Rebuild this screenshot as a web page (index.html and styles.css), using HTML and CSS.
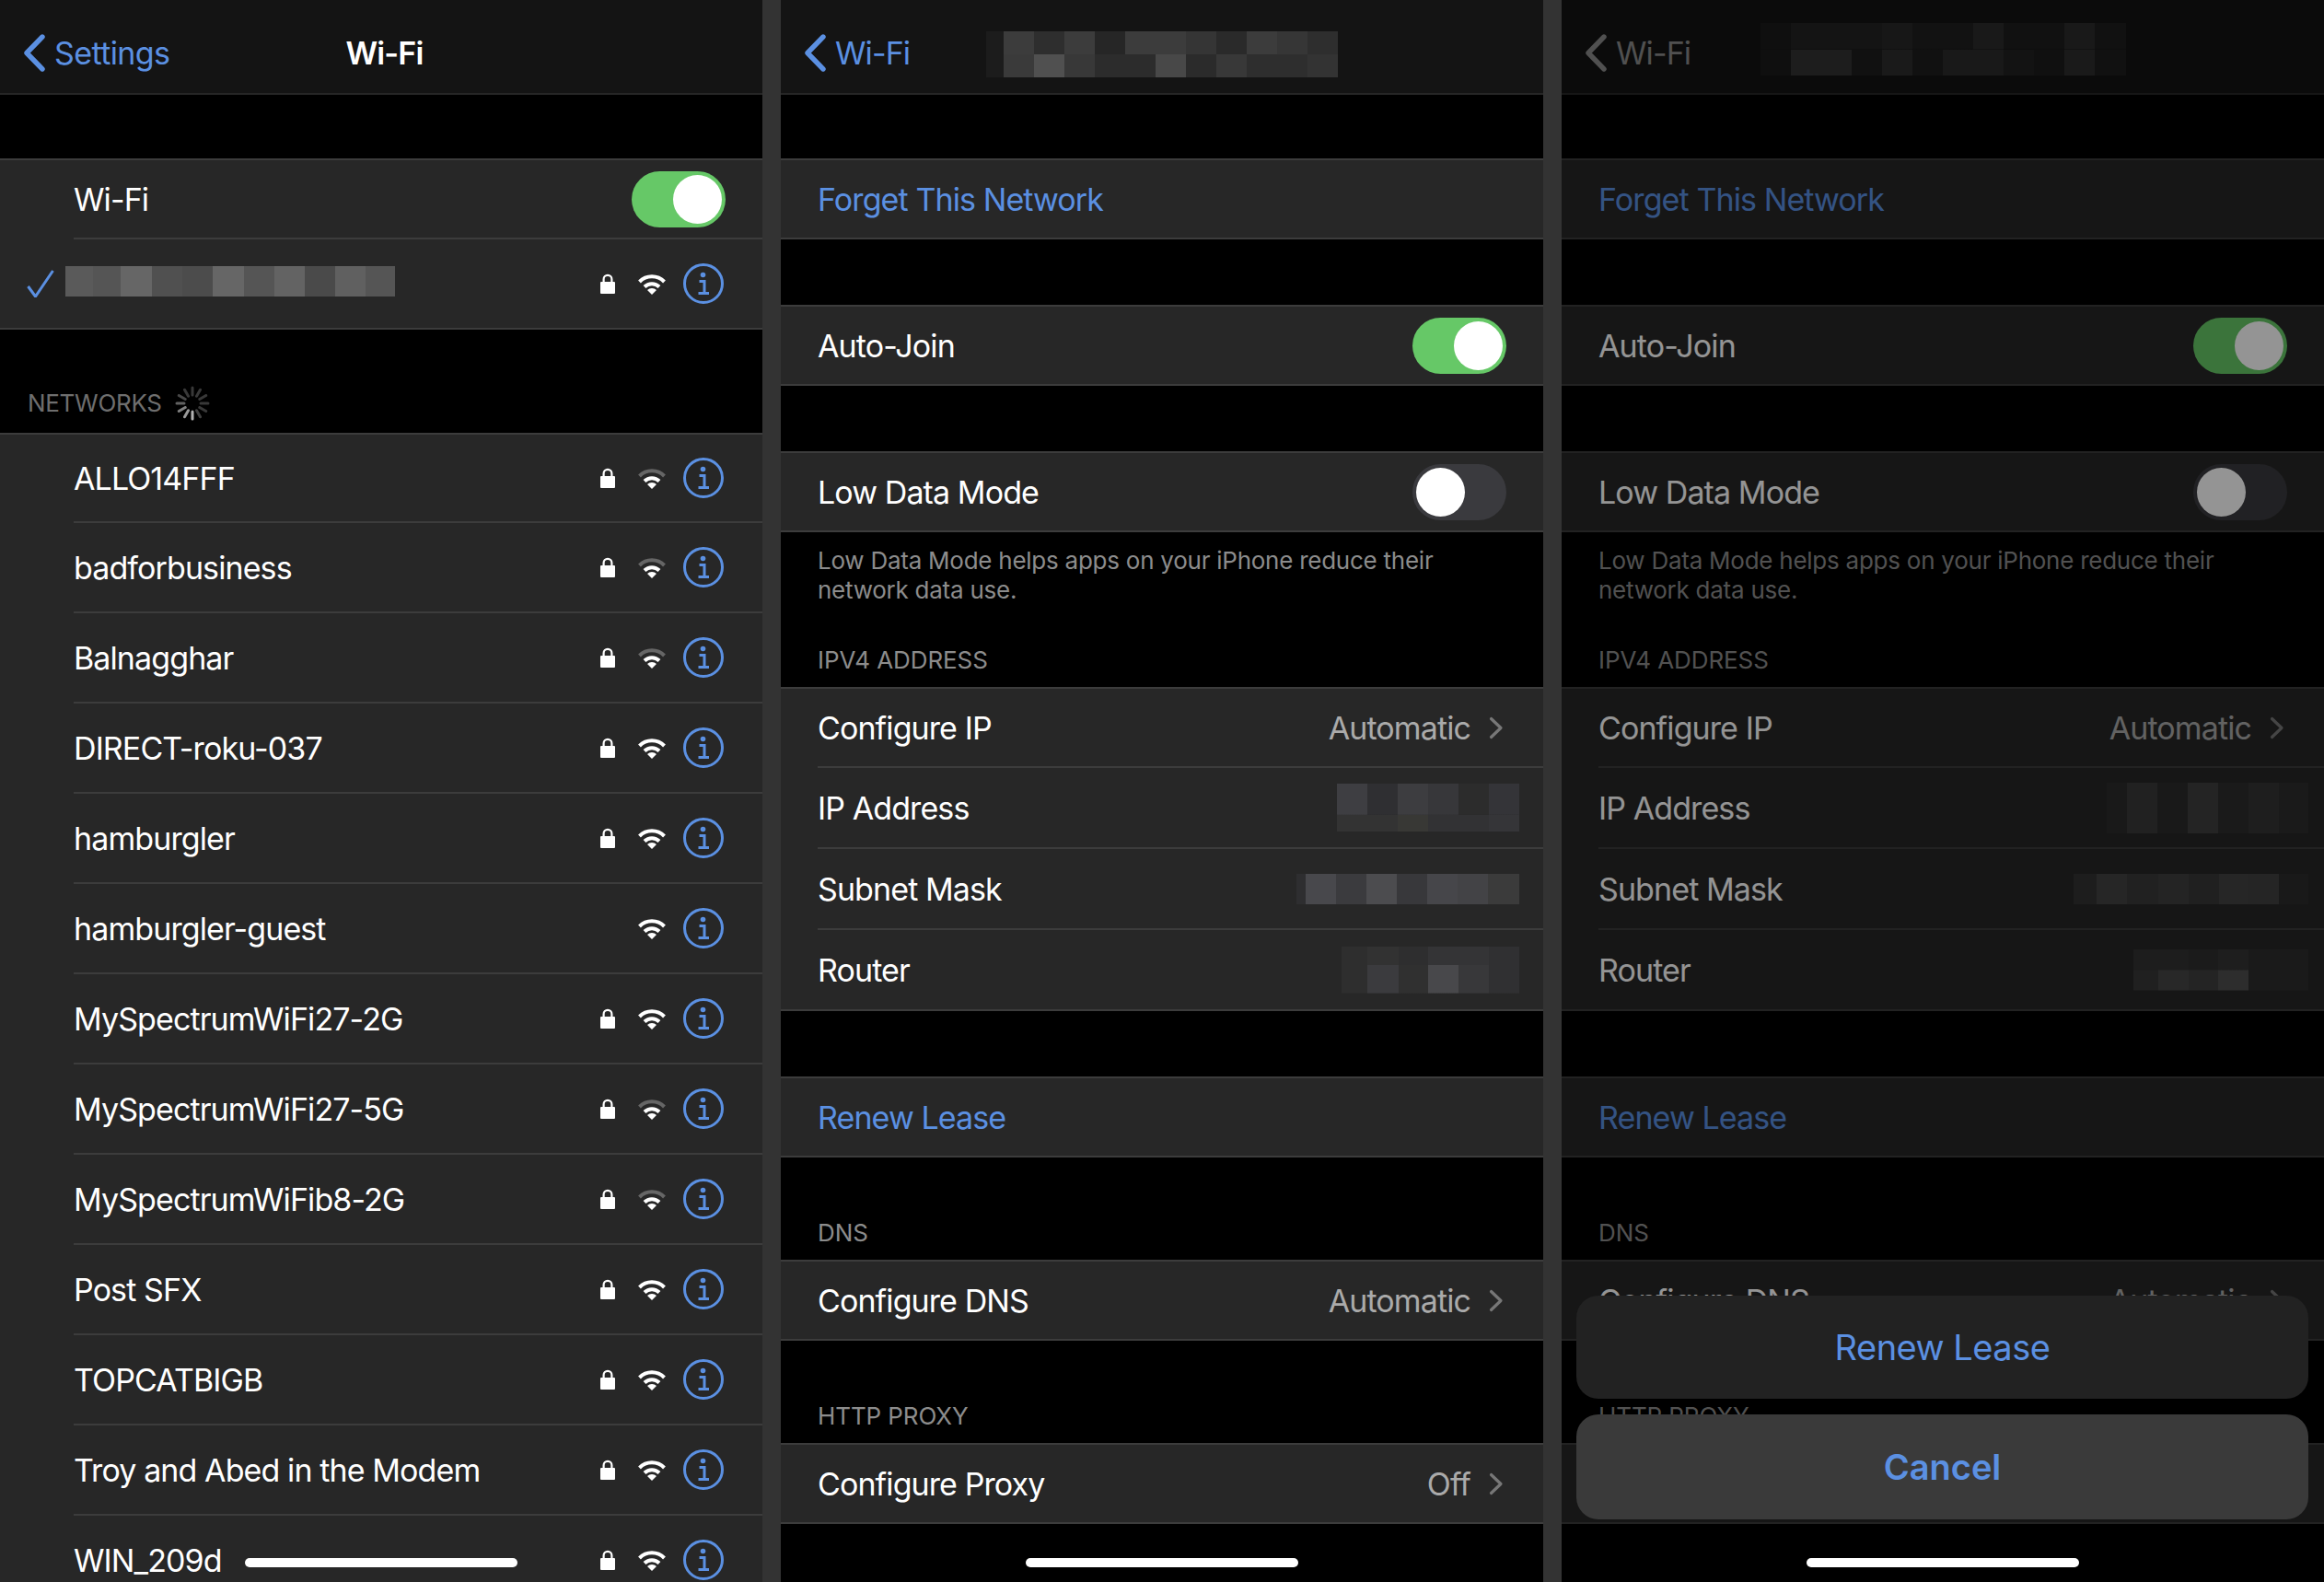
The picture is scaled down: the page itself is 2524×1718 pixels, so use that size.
FILE: index.html
```html
<!DOCTYPE html>
<html>
<head>
  <title>Wi-Fi Settings</title>
  <link rel="stylesheet" href="styles.css">
</head>
<body>
  <svg class="defs" width="0" height="0">
    <symbol id="i-back" viewBox="0 0 24 41">
      <path d="M21 3 L4 20.5 L21 38" fill="none" stroke="currentColor" stroke-width="5.4" stroke-linecap="round" stroke-linejoin="round"/>
    </symbol>
    <symbol id="i-check" viewBox="0 0 30 30">
      <path d="M1.5 18 L9.5 29 L28.5 1" fill="none" stroke="currentColor" stroke-width="3"/>
    </symbol>
    <symbol id="i-lock" viewBox="0 0 16 22">
      <path d="M3.6 10 V6.2 A4.4 4.4 0 0 1 12.4 6.2 V10" fill="none" stroke="#fff" stroke-width="2.2"/>
      <rect y="9" width="16" height="13" rx="1" fill="#fff"/>
    </symbol>
    <symbol id="i-wifi" viewBox="0 0 32 23">
      <path d="M2.5 9 A19 19 0 0 1 29.5 9" fill="none" style="stroke: var(--arc, #fff)" stroke-width="4"/>
      <path d="M8 14.5 A11.5 11.5 0 0 1 24 14.5" fill="none" stroke="#fff" stroke-width="4"/>
      <path d="M16 23 L11 18 A7 7 0 0 1 21 18 Z" fill="#fff"/>
    </symbol>
    <symbol id="i-info" viewBox="0 0 44 44">
      <circle cx="22" cy="22" r="20.5" fill="none" stroke="currentColor" stroke-width="3"/>
      <circle cx="21.5" cy="12.5" r="2.8" fill="currentColor"/>
      <path d="M17.5 19.5 H23 V32 M16.5 32.5 H28" fill="none" stroke="currentColor" stroke-width="3"/>
    </symbol>
    <symbol id="i-next" viewBox="0 0 16 25">
      <path d="M2.5 2.5 L13 12.5 L2.5 22.5" fill="none" stroke="currentColor" stroke-width="3.2" stroke-linecap="round" stroke-linejoin="round"/>
    </symbol>
    <symbol id="i-spin" viewBox="0 0 38 38">
      <g stroke="#fff" stroke-width="3" stroke-linecap="round">
        <path d="M19 2 V10" opacity=".22"/>
        <path d="M27.5 4.3 L23.5 11.2" opacity=".22"/>
        <path d="M33.7 10.5 L26.8 14.5" opacity=".22"/>
        <path d="M36 19 H28" opacity=".22"/>
        <path d="M33.7 27.5 L26.8 23.5" opacity=".22"/>
        <path d="M27.5 33.7 L23.5 26.8" opacity=".25"/>
        <path d="M19 36 V28" opacity=".7"/>
        <path d="M10.5 33.7 L14.5 26.8" opacity=".6"/>
        <path d="M4.3 27.5 L11.2 23.5" opacity=".5"/>
        <path d="M2 19 H10" opacity=".38"/>
        <path d="M4.3 10.5 L11.2 14.5" opacity=".28"/>
        <path d="M10.5 4.3 L14.5 11.2" opacity=".22"/>
      </g>
    </symbol>
  </svg>

  <div class="screens">

    <section class="panel">
      <header class="nav nav-center">
        <a class="back"><svg class="icon-back"><use href="#i-back"/></svg>Settings</a>
        <h1 class="title">Wi-Fi</h1>
      </header>
      <div class="group wifi-group">
        <div class="row wide">
          <span>Wi-Fi</span>
          <span class="toggle on"></span>
        </div>
        <div class="row wide current">
          <svg class="icon-check"><use href="#i-check"/></svg>
          <span class="redact ssid"></span>
          <span class="net-icons">
            <svg class="icon-lock"><use href="#i-lock"/></svg>
            <svg class="icon-wifi"><use href="#i-wifi"/></svg>
            <svg class="icon-info"><use href="#i-info"/></svg>
          </span>
        </div>
      </div>
      <div class="head networks-head">NETWORKS <svg class="icon-spin"><use href="#i-spin"/></svg></div>
      <div class="group flush">
        <div class="row wide net">
          <span>ALLO14FFF</span>
          <span class="net-icons weak">
            <svg class="icon-lock"><use href="#i-lock"/></svg>
            <svg class="icon-wifi"><use href="#i-wifi"/></svg>
            <svg class="icon-info"><use href="#i-info"/></svg>
          </span>
        </div>
        <div class="row wide net">
          <span>badforbusiness</span>
          <span class="net-icons weak">
            <svg class="icon-lock"><use href="#i-lock"/></svg>
            <svg class="icon-wifi"><use href="#i-wifi"/></svg>
            <svg class="icon-info"><use href="#i-info"/></svg>
          </span>
        </div>
        <div class="row wide net">
          <span>Balnagghar</span>
          <span class="net-icons weak">
            <svg class="icon-lock"><use href="#i-lock"/></svg>
            <svg class="icon-wifi"><use href="#i-wifi"/></svg>
            <svg class="icon-info"><use href="#i-info"/></svg>
          </span>
        </div>
        <div class="row wide net">
          <span>DIRECT-roku-037</span>
          <span class="net-icons">
            <svg class="icon-lock"><use href="#i-lock"/></svg>
            <svg class="icon-wifi"><use href="#i-wifi"/></svg>
            <svg class="icon-info"><use href="#i-info"/></svg>
          </span>
        </div>
        <div class="row wide net">
          <span>hamburgler</span>
          <span class="net-icons">
            <svg class="icon-lock"><use href="#i-lock"/></svg>
            <svg class="icon-wifi"><use href="#i-wifi"/></svg>
            <svg class="icon-info"><use href="#i-info"/></svg>
          </span>
        </div>
        <div class="row wide net">
          <span>hamburgler-guest</span>
          <span class="net-icons">
            <svg class="icon-wifi"><use href="#i-wifi"/></svg>
            <svg class="icon-info"><use href="#i-info"/></svg>
          </span>
        </div>
        <div class="row wide net">
          <span>MySpectrumWiFi27-2G</span>
          <span class="net-icons">
            <svg class="icon-lock"><use href="#i-lock"/></svg>
            <svg class="icon-wifi"><use href="#i-wifi"/></svg>
            <svg class="icon-info"><use href="#i-info"/></svg>
          </span>
        </div>
        <div class="row wide net">
          <span>MySpectrumWiFi27-5G</span>
          <span class="net-icons weak">
            <svg class="icon-lock"><use href="#i-lock"/></svg>
            <svg class="icon-wifi"><use href="#i-wifi"/></svg>
            <svg class="icon-info"><use href="#i-info"/></svg>
          </span>
        </div>
        <div class="row wide net">
          <span>MySpectrumWiFib8-2G</span>
          <span class="net-icons weak">
            <svg class="icon-lock"><use href="#i-lock"/></svg>
            <svg class="icon-wifi"><use href="#i-wifi"/></svg>
            <svg class="icon-info"><use href="#i-info"/></svg>
          </span>
        </div>
        <div class="row wide net">
          <span>Post SFX</span>
          <span class="net-icons">
            <svg class="icon-lock"><use href="#i-lock"/></svg>
            <svg class="icon-wifi"><use href="#i-wifi"/></svg>
            <svg class="icon-info"><use href="#i-info"/></svg>
          </span>
        </div>
        <div class="row wide net">
          <span>TOPCATBIGB</span>
          <span class="net-icons">
            <svg class="icon-lock"><use href="#i-lock"/></svg>
            <svg class="icon-wifi"><use href="#i-wifi"/></svg>
            <svg class="icon-info"><use href="#i-info"/></svg>
          </span>
        </div>
        <div class="row wide net">
          <span>Troy and Abed in the Modem</span>
          <span class="net-icons">
            <svg class="icon-lock"><use href="#i-lock"/></svg>
            <svg class="icon-wifi"><use href="#i-wifi"/></svg>
            <svg class="icon-info"><use href="#i-info"/></svg>
          </span>
        </div>
        <div class="row wide net">
          <span>WIN_209d</span>
          <span class="net-icons">
            <svg class="icon-lock"><use href="#i-lock"/></svg>
            <svg class="icon-wifi"><use href="#i-wifi"/></svg>
            <svg class="icon-info"><use href="#i-info"/></svg>
          </span>
        </div>
      </div>
      <div class="home-bar"></div>
    </section>

    <section class="panel">
      <header class="nav">
        <a class="back"><svg class="icon-back"><use href="#i-back"/></svg>Wi-Fi</a>
        <span class="redact title-a"></span>
      </header>
      <div class="group"><div class="row link">Forget This Network</div></div>
      <div class="group">
        <div class="row"><span>Auto-Join</span><span class="toggle on"></span></div>
      </div>
      <div class="group">
        <div class="row"><span>Low Data Mode</span><span class="toggle"></span></div>
      </div>
      <p class="note">Low Data Mode helps apps on your iPhone reduce their<br>network data use.</p>
      <div class="head ipv4-head">IPV4 ADDRESS</div>
      <div class="group flush">
        <div class="row"><span>Configure IP</span><span class="value">Automatic<svg class="icon-next"><use href="#i-next"/></svg></span></div>
        <div class="row"><span>IP Address</span><span class="redact ip-a"></span></div>
        <div class="row"><span>Subnet Mask</span><span class="redact mask-a"></span></div>
        <div class="row"><span>Router</span><span class="redact router-a"></span></div>
      </div>
      <div class="group renew"><div class="row link">Renew Lease</div></div>
      <div class="head dns-head">DNS</div>
      <div class="group flush">
        <div class="row"><span>Configure DNS</span><span class="value">Automatic<svg class="icon-next"><use href="#i-next"/></svg></span></div>
      </div>
      <div class="head tall-head">HTTP PROXY</div>
      <div class="group flush">
        <div class="row"><span>Configure Proxy</span><span class="value">Off<svg class="icon-next"><use href="#i-next"/></svg></span></div>
      </div>
      <div class="home-bar"></div>
    </section>

    <section class="panel dimmed">
      <header class="nav">
        <a class="back"><svg class="icon-back"><use href="#i-back"/></svg>Wi-Fi</a>
        <span class="redact title-b"></span>
      </header>
      <div class="group"><div class="row link">Forget This Network</div></div>
      <div class="group">
        <div class="row"><span>Auto-Join</span><span class="toggle on"></span></div>
      </div>
      <div class="group">
        <div class="row"><span>Low Data Mode</span><span class="toggle"></span></div>
      </div>
      <p class="note">Low Data Mode helps apps on your iPhone reduce their<br>network data use.</p>
      <div class="head ipv4-head">IPV4 ADDRESS</div>
      <div class="group flush">
        <div class="row"><span>Configure IP</span><span class="value">Automatic<svg class="icon-next"><use href="#i-next"/></svg></span></div>
        <div class="row"><span>IP Address</span><span class="redact ip-b"></span></div>
        <div class="row"><span>Subnet Mask</span><span class="redact mask-b"></span></div>
        <div class="row"><span>Router</span><span class="redact router-b"></span></div>
      </div>
      <div class="group renew"><div class="row link">Renew Lease</div></div>
      <div class="head dns-head">DNS</div>
      <div class="group flush">
        <div class="row"><span>Configure DNS</span><span class="value">Automatic<svg class="icon-next"><use href="#i-next"/></svg></span></div>
      </div>
      <div class="head tall-head">HTTP PROXY</div>
      <div class="group flush">
        <div class="row"><span>Configure Proxy</span><span class="value">Off<svg class="icon-next"><use href="#i-next"/></svg></span></div>
      </div>
      <div class="scrim"></div>
      <div class="sheet">
        <div class="sheet-btn">Renew Lease</div>
        <div class="sheet-btn cancel">Cancel</div>
      </div>
      <div class="home-bar"></div>
    </section>

  </div>
</body>
</html>
```

FILE: styles.css
```css
:root {
  --blue: #5b90e2;
  --row-bg: #272727;
  --nav-bg: #141414;
  --line: #3c3c3c;
  --green: #66c867;
}

* {
  box-sizing: border-box;
}

body {
  margin: 0;
  height: 1718px;
  overflow: hidden;
  background: #333;
  color: #fff;
  font-family: 'Inter', 'Liberation Sans', sans-serif;
  font-size: 34px;
  letter-spacing: -0.9px;
}

.defs {
  position: absolute;
}

.screens {
  display: grid;
  grid-template-columns: repeat(3, 828px);
  gap: 20px;
  height: 1718px;
}

.panel {
  position: relative;
  background: #000;
  overflow: hidden;
}

/* nav bar */
.nav {
  display: flex;
  align-items: center;
  height: 103px;
  padding: 14px 0 0 25px;
  background: var(--nav-bg);
  border-bottom: 2px solid #262626;
}

.nav-center {
  display: grid;
  grid-template-columns: 1fr auto 1fr;
  letter-spacing: -0.6px;
}

.back {
  display: flex;
  align-items: center;
  gap: 10px;
  color: var(--blue);
}

.icon-back {
  width: 24px;
  height: 41px;
}

.title {
  margin: 0 0 0 -18px;
  font-size: 34px;
  font-weight: 600;
  letter-spacing: -0.9px;
}

/* groups and rows */
.group {
  margin-top: 69px;
  background: var(--row-bg);
  border-top: 2px solid var(--line);
  border-bottom: 2px solid var(--line);
}

.group + .group {
  margin-top: 71px;
}

.group.flush {
  margin-top: 0;
}

.group.renew {
  margin-top: 71px;
}

.row {
  display: flex;
  align-items: center;
  justify-content: space-between;
  height: 88px;
  margin-left: 40px;
  padding-right: 41px;
  border-bottom: 2px solid var(--line);
}

.group .row:first-child {
  height: 86px;
}

.group .row:last-child {
  border-bottom: none;
  height: 86px;
}

.group .row:only-child {
  height: 84px;
}

.row.wide {
  margin-left: 80px;
}

.row.current {
  justify-content: flex-start;
  height: 96px !important;
  margin-left: 29px;
  gap: 12px;
  padding-right: 42px;
}

.row.net {
  height: 98px;
  padding-right: 42px;
}

.group .row.net:first-child {
  height: 96px;
}

.group .row.net:last-child {
  border-bottom: 2px solid var(--line);
  height: 98px;
}

.link {
  color: var(--blue);
}

.value {
  display: flex;
  align-items: center;
  gap: 20px;
  color: #aaa;
}

.icon-next {
  width: 16px;
  height: 25px;
  color: #777;
  margin-right: 2px;
}

/* section labels */
.head {
  display: flex;
  align-items: flex-end;
  padding: 0 40px 13px;
  font-size: 26px;
  line-height: 32px;
  letter-spacing: -0.1px;
  color: #8c8c8c;
}

.networks-head {
  align-items: center;
  gap: 14px;
  height: 112px;
  padding: 47px 0 0 30px;
  letter-spacing: -0.3px;
  color: #6e6e6e;
}

.ipv4-head {
  height: 90px;
}

.dns-head {
  height: 111px;
}

.tall-head {
  height: 111px;
}

.note {
  margin: 0;
  padding: 15px 40px 0;
  height: 78px;
  font-size: 26px;
  line-height: 32px;
  letter-spacing: -0.25px;
  color: #8c8c8c;
}

.icon-spin {
  width: 38px;
  height: 38px;
}

/* switches */
.toggle {
  position: relative;
  width: 102px;
  height: 61px;
  margin-right: -1px;
  border-radius: 31px;
  background: #3a3a3e;
}

.toggle::after {
  content: '';
  position: absolute;
  top: 4px;
  left: 4px;
  width: 53px;
  height: 53px;
  border-radius: 50%;
  background: #fff;
}

.toggle.on {
  background: var(--green);
}

.toggle.on::after {
  left: 45px;
}

/* network row icons */
.net-icons {
  display: flex;
  align-items: center;
  margin-left: auto;
}

.weak {
  --arc: #666;
}

.icon-check {
  width: 30px;
  height: 30px;
  color: var(--blue);
}

.icon-lock {
  width: 16px;
  height: 22px;
  margin-right: 24px;
}

.icon-wifi {
  width: 32px;
  height: 23px;
  margin-right: 18px;
}

.icon-info {
  width: 44px;
  height: 44px;
  color: var(--blue);
}

/* pixelated redactions */
.redact {
  display: block;
  flex: none;
}

.ssid {
  width: 358px;
  height: 33px;
  margin-top: -5px;
  background: linear-gradient(90deg, #5a5a5a 0 30px, #555 0 60px, #666 0 94px, #505050 0 127px, #4c4c4c 0 160px, #666 0 194px, #555 0 227px, #636363 0 260px, #4a4a4a 0 293px, #606060 0 326px, #555 0);
}

.title-a {
  width: 382px;
  height: 50px;
  margin: 3px 0 0 83px;
  background:
    linear-gradient(90deg, #1c1c1c 0 19px, #3c3c3c 0 52px, #2e2e2e 0 85px, #3c3c3c 0 118px, #262626 0 151px, #3c3c3c 0 217px, #353535 0 250px, #2a2a2a 0 283px, #3c3c3c 0 316px, #363636 0 349px, #2e2e2e 0) top / 100% 50% no-repeat,
    linear-gradient(90deg, #1c1c1c 0 19px, #3a3a3a 0 52px, #505050 0 85px, #383838 0 118px, #2c2c2c 0 184px, #484848 0 217px, #2b2b2b 0 250px, #383838 0 283px, #2e2e2e 0 349px, #333 0) bottom / 100% 50% no-repeat;
}

.title-b {
  width: 397px;
  height: 57px;
  margin: -8px 0 0 76px;
  background:
    linear-gradient(90deg, #1a1a1a 0 33px, #232323 0 132px, #292929 0 165px, #1f1f1f 0 231px, #2b2b2b 0 264px, #1e1e1e 0 330px, #2c2c2c 0 363px, #1e1e1e 0) top / 100% 50% no-repeat,
    linear-gradient(90deg, #1a1a1a 0 33px, #333 0 99px, #1e1e1e 0 132px, #2e2e2e 0 165px, #1e1e1e 0 198px, #2b2b2b 0 264px, #222 0 297px, #1c1c1c 0 330px, #2e2e2e 0 363px, #1e1e1e 0) bottom / 100% 50% no-repeat;
}

.ip-a {
  width: 198px;
  height: 52px;
  margin-right: -15px;
  background:
    linear-gradient(90deg, #3e3e42 0 33px, #2f2f32 0 66px, #3d3d40 0 99px, #37373a 0 132px, #2c2c2c 0 165px, #343438 0) top / 100% 65% no-repeat,
    linear-gradient(90deg, #333 0 66px, #383835 0 99px, #323234 0 165px, #353538 0) bottom / 100% 35% no-repeat;
}

.mask-a {
  width: 242px;
  height: 33px;
  margin-right: -15px;
  background: linear-gradient(90deg, #2e2e30 0 10px, #48484c 0 43px, #3b3b3e 0 76px, #4c4c4f 0 109px, #38383b 0 142px, #46464a 0 175px, #434346 0 208px, #3b3b3b 0);
}

.router-a {
  width: 193px;
  height: 51px;
  margin-right: -15px;
  background:
    linear-gradient(90deg, #2e2e2e 0 28px, #323232 0 62px, #2e2e2f 0 94px, #343436 0 160px, #303032 0) top / 100% 40% no-repeat,
    linear-gradient(90deg, #2e2e2e 0 28px, #3b3b3e 0 62px, #303030 0 94px, #48484b 0 127px, #38383a 0 160px, #303032 0) bottom / 100% 60% no-repeat;
}

.ip-b {
  width: 219px;
  height: 55px;
  margin-right: -24px;
  background: linear-gradient(90deg, #2b2b2b 0 22px, #393939 0 55px, #2b2b2b 0 88px, #3e3e3e 0 121px, #2d2d2d 0 154px, #353535 0 187px, #2d2d2d 0);
}

.mask-b {
  width: 255px;
  height: 33px;
  margin-right: -24px;
  background: linear-gradient(90deg, #323232 0 25px, #424242 0 58px, #393939 0 92px, #3e3e3e 0 125px, #373737 0 158px, #424242 0 190px, #404040 0 223px, #2b2b2b 0);
}

.router-b {
  width: 190px;
  height: 45px;
  margin-right: -24px;
  background:
    linear-gradient(90deg, #323232 0 60px, #303030 0 92px, #343434 0 125px, #2d2d2d 0) top / 100% 50% no-repeat,
    linear-gradient(90deg, #373737 0 27px, #454545 0 60px, #3e3e3e 0 92px, #4f4f4f 0 125px, #2d2d2d 0) bottom / 100% 50% no-repeat;
}

/* third screen: dimmed, with action sheet on top */
.dimmed .back {
  color: #8a8a8a;
}

.scrim {
  position: absolute;
  inset: 0;
  background: rgba(0,0,0,0.42);
}

.sheet {
  position: absolute;
  top: 1407px;
  left: 16px;
  right: 17px;
  display: flex;
  flex-direction: column;
  gap: 17px;
}

.sheet-btn {
  display: flex;
  align-items: center;
  justify-content: center;
  height: 112px;
  border-radius: 24px;
  background: #222;
  color: var(--blue);
  font-size: 38px;
  letter-spacing: -0.5px;
}

.sheet-btn.cancel {
  height: 114px;
  background: #3a3a3a;
  font-weight: 600;
  letter-spacing: 0;
}

.home-bar {
  position: absolute;
  top: 1692px;
  left: 266px;
  width: 296px;
  height: 10px;
  border-radius: 5px;
  background: #fff;
}
```
